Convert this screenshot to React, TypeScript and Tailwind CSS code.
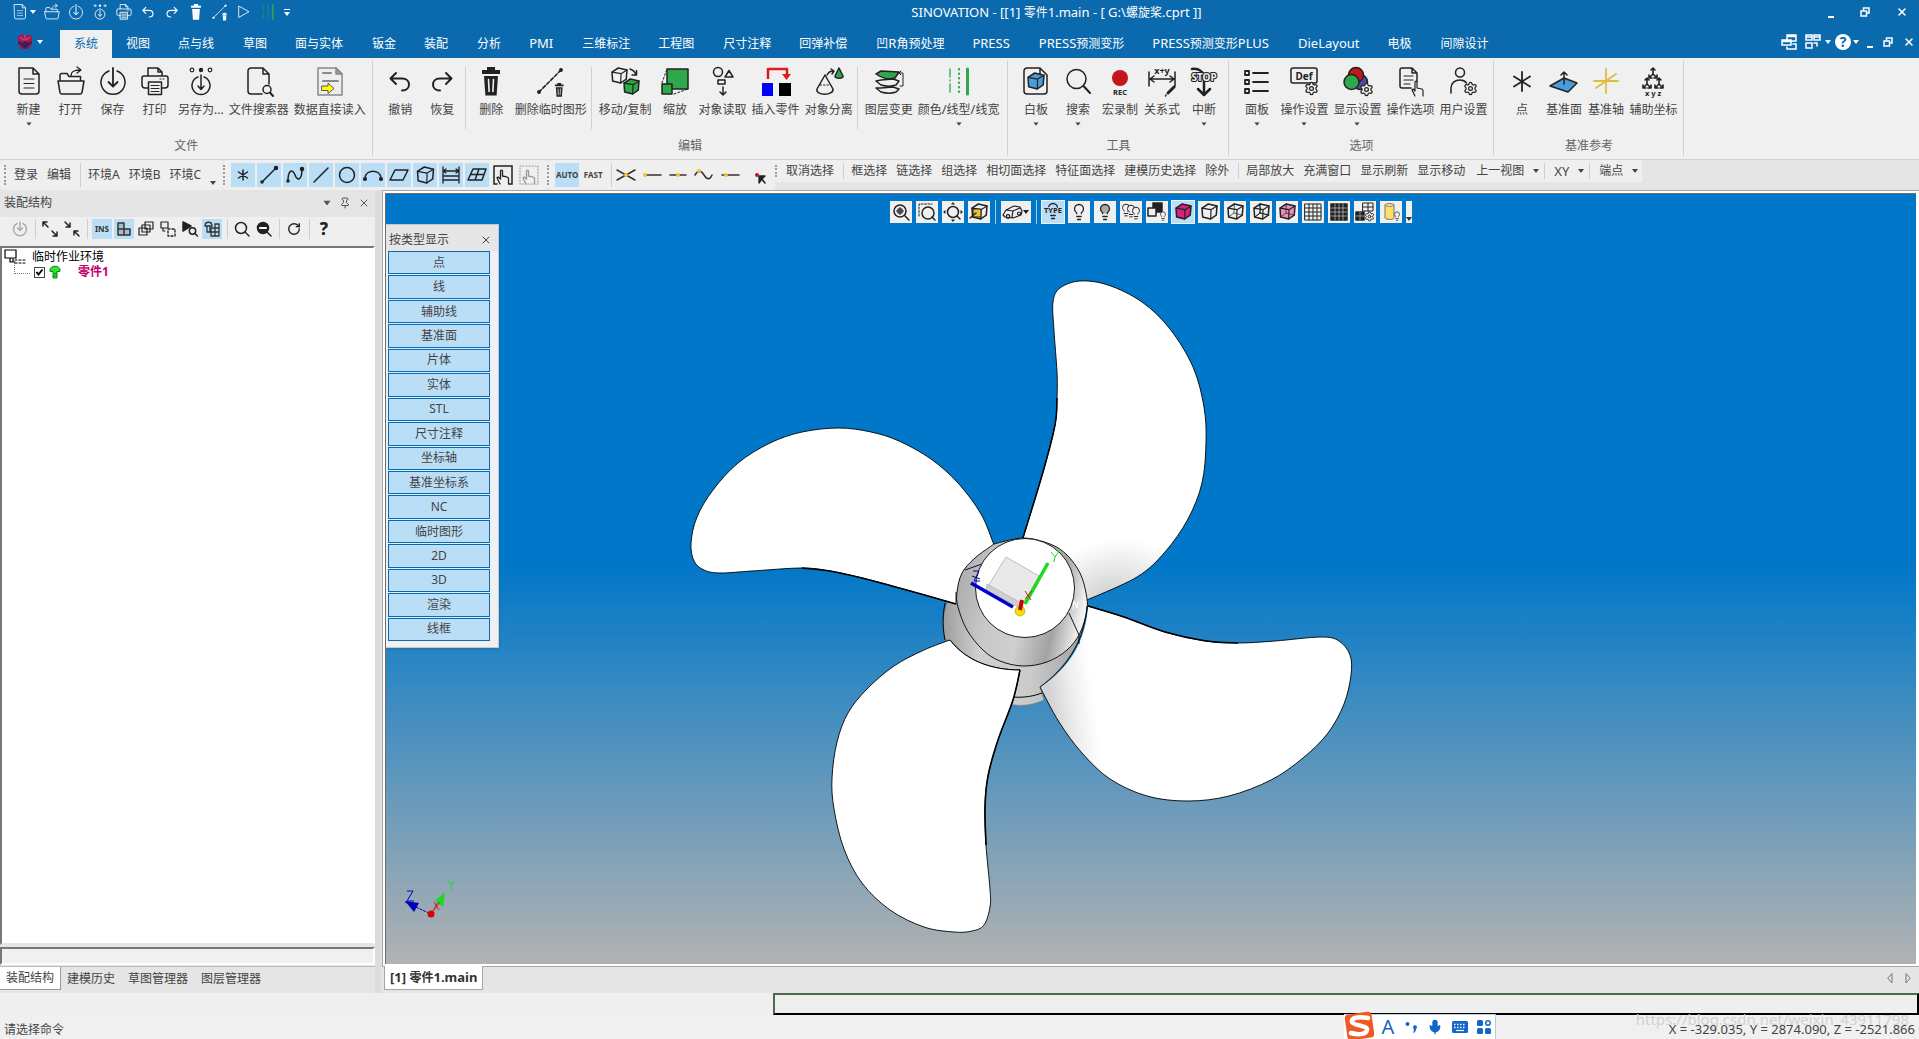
import React, { ReactNode } from "react";
import { Settings, Lightbulb, Pin, X, RotateCw, Mic } from "lucide-react";

type Pt = [number, number];

/** Catmull-Rom spline through the points, as an SVG path. */
function smooth(pts: Pt[], tail = ""): string {
  let d = `M${pts[0][0]} ${pts[0][1]}`;
  for (let i = 0; i < pts.length - 1; i++) {
    const p0 = pts[Math.max(i - 1, 0)];
    const p1 = pts[i];
    const p2 = pts[i + 1];
    const p3 = pts[Math.min(i + 2, pts.length - 1)];
    d += `C${p1[0] + (p2[0] - p0[0]) / 6} ${p1[1] + (p2[1] - p0[1]) / 6} ${p2[0] - (p3[0] - p1[0]) / 6} ${p2[1] - (p3[1] - p1[1]) / 6} ${p2[0]} ${p2[1]}`;
  }
  return d + tail;
}

/* ---------- shared bits ---------- */

/** Text whose Latin runs are set one pixel larger than the Chinese around them. */
function Mixed({ children }: { children: string }) {
  const runs = children.match(/[\x20-\x7e]+|[^\x20-\x7e]+/g) ?? [];
  return (
    <>
      {runs.map((r, i) => (/[A-Za-z0-9/\[\]]/.test(r) ? <span key={i} className="text-[13px] leading-none">{r}</span> : r))}
    </>
  );
}

function Caret({ className = "" }: { className?: string }) {
  return (
    <svg viewBox="0 0 6 4" className={`h-1 w-1.5 shrink-0 ${className}`} fill="currentColor" aria-hidden>
      <path d="M0 0h6L3 4z" />
    </svg>
  );
}

function Svg({ box, className, children }: { box: string; className: string; children: ReactNode }) {
  return (
    <svg
      viewBox={box}
      className={`shrink-0 overflow-visible ${className}`}
      fill="none"
      stroke="currentColor"
      strokeWidth="1.5"
      strokeLinecap="round"
      strokeLinejoin="round"
      aria-hidden
    >
      {children}
    </svg>
  );
}

function Cube({ x, y, s, fill = "none", hidden = false }: { x: number; y: number; s: number; fill?: string; hidden?: boolean }) {
  const p = (a: number, b: number) => `${x + a * s} ${y + b * s}`;
  return (
    <g>
      <path fill={fill} d={`M${p(0, 0.27)}L${p(0.42, 0)}L${p(1, 0.14)}L${p(0.95, 0.74)}L${p(0.58, 1)}L${p(0.04, 0.86)}Z`} />
      <path strokeWidth="1.2" d={`M${p(0, 0.27)}L${p(0.6, 0.38)}L${p(1, 0.14)}M${p(0.6, 0.38)}L${p(0.58, 1)}`} />
      {hidden && <path strokeWidth="0.7" d={`M${p(0.42, 0)}L${p(0.4, 0.6)}L${p(0.04, 0.86)}M${p(0.4, 0.6)}L${p(0.95, 0.74)}`} />}
    </g>
  );
}

function Gear({ x, y, s }: { x: number; y: number; s: number }) {
  return <Settings x={x} y={y} width={s} height={s} strokeWidth={2} fill="#f0f0f0" />;
}

function Grip() {
  return <span className="h-5 w-0 shrink-0 border-l-2 border-dotted border-[#9a9a9a]" />;
}

/* ---------- ribbon drawings (28 x 30) ---------- */

const trash = (
  <>
    <path fill="currentColor" stroke="none" d="M5 3h5V0h8v3h5v4H5zM7 9h14l-1.4 19.500H8.400z" />
    <path stroke="#f0f0f0" strokeWidth="1.600" d="M11.500 12.500l.6 12M16.500 12.500l-.6 12" />
  </>
);

const art: Record<string, ReactNode> = {
  doc: (
    <>
      <path d="M4 1h14l6 6v17a3 3 0 0 1-3 3H7a3 3 0 0 1-3-3zM18 1v6h6" />
      <path strokeWidth="1.100" d="M9 12h10M9 16.500h10M9 21h10" />
    </>
  ),
  open: (
    <>
      <path d="M3 14V8a1.500 1.500 0 0 1 1.500-1.500H10l2 3h11.500V14M1 14h26l-2 11.500a2 2 0 0 1-2 1.500H5a2 2 0 0 1-2-1.500z" />
      <path d="M14 9c0-4 2-6 9-6M20 0l4 3-4 3" strokeWidth="1.300" />
    </>
  ),
  save: (
    <>
      <path d="M10 4a12 12 0 1 0 8 0" />
      <path strokeWidth="1.800" d="M14 1v18M9.500 15l4.500 4.500 4.500-4.500" />
    </>
  ),
  print: (
    <>
      <path d="M7 9V1h10l4 4v4M17 1v4h4M7 21H4a3 3 0 0 1-3-3v-7a2 2 0 0 1 2-2h22a2 2 0 0 1 2 2v7a3 3 0 0 1-3 3h-3" />
      <path fill="#f0f0f0" fillOpacity=".2" d="M7.500 15h13v12.500h-13z" />
      <path strokeWidth="1" d="M10 18.500h8M10 21.500h8M10 24.500h8M19 12h1M22 12h1" />
    </>
  ),
  saveAs: (
    <>
      <circle cx="5" cy="3" r="1.800" strokeWidth="1.200" />
      <circle cx="14" cy="3" r="2.200" fill="currentColor" stroke="none" />
      <circle cx="23" cy="3" r="1.800" strokeWidth="1.200" />
      <path d="M11 10a9 9 0 1 0 6 0M14 8v14M11 19l3 3.500 3-3.500" />
    </>
  ),
  find: (
    <>
      <path d="M17 27H6a3 3 0 0 1-3-3V4a3 3 0 0 1 3-3h12l6 6v10M18 1v6h6" />
      <circle cx="22" cy="22.500" r="4" />
      <path strokeWidth="2" d="M25 25.500l3 3.500" />
    </>
  ),
  importDoc: (
    <>
      <path stroke="#888" fill="#eee" d="M2 1h18l6 6v21H2z" />
      <path stroke="#888" fill="#999" d="M20 1v6h6z" />
      <path stroke="#888" strokeWidth="2" d="M7 6h8M7 14h15" />
      <path fill="#ff0" stroke="#555" strokeWidth="1" d="M6 19h6v-3l6 5.500-6 5v-3H6z" />
    </>
  ),
  undo: <path strokeWidth="2" d="M10 6L4.500 11.500 10 17M5 11.500h11c5 0 7 3 7 6s-2 6-7 6" />,
  redo: <path strokeWidth="2" d="M18 6l5.500 5.500L18 17M23 11.500H12c-5 0-7 3-7 6s2 6 7 6" />,
  trash,
  trashTemp: (
    <>
      <path strokeWidth="1.600" strokeDasharray="3.500 2" d="M2 25L24 3" />
      <circle cx="2" cy="25" r="1.200" fill="currentColor" />
      <circle cx="24" cy="3" r="1.200" fill="currentColor" />
      <g transform="translate(15.500 16) scale(.48)">{trash}</g>
    </>
  ),
  move: (
    <>
      <Cube x={1} y={1} s={15} />
      <Cube x={13} y={12} s={15} fill="#2fa84a" />
      <path d="M19 2c3 1 5 3 6 5.500M25.500 3.500v4.500h-4.500" />
    </>
  ),
  scale: (
    <>
      <path strokeDasharray="2 2" strokeWidth="1" d="M1 16L6 2M13 27l14-5" />
      <path fill="#2fa84a" d="M6 2h21v20H6z" />
      <path fill="#2fa84a" d="M1 17h10v10H1z" />
    </>
  ),
  pick: (
    <>
      <circle cx="9" cy="5" r="4.500" />
      <path d="M16 10l4-6.500 4 6.500zM9 13h7v4H9zM14 20v8M11 25l3 3 3-3" />
    </>
  ),
  insert: (
    <>
      <path stroke="none" fill="#00f" d="M0 16h11v13H0z" />
      <path stroke="none" fill="#000" d="M17 16h12v13H17z" />
      <path stroke="#e01b1b" strokeWidth="2.500" strokeLinecap="butt" d="M6 12V2h19v6" />
      <path stroke="none" fill="#e01b1b" d="M20 7h9l-4.500 6z" />
    </>
  ),
  split: (
    <>
      <path d="M10 8L2 22c-2 7 17 7 16 0z" />
      <path strokeWidth="1" strokeDasharray="1.500 2" d="M5 18h9" />
      <path fill="#2fa84a" d="M24 1l-4 8c0 3 9 3 8 0z" />
      <path d="M12 8c1-2 3-4 6-4M16 2l3 2-2 3" />
    </>
  ),
  layers: (
    <>
      <path fill="#f0f0f0" d="M1 21l5 4c7 2 12 1 15 0l3-3-6-2-12 1z" />
      <path fill="#f0f0f0" d="M1 14l5 4c7 2 12 1 15 0l3-4-6-2-12 1z" />
      <path fill="#2fa84a" d="M1 7l5-3 18 1-4 6c-6 2-13 0-19-4z" />
      <path strokeWidth="1" d="M25 6h3v13h-3M26 4l-2 2 2 2" />
    </>
  ),
  lines: (
    <g stroke="#2fa84a">
      <path strokeWidth="1.300" strokeDasharray="8 3 1 3" d="M5 2v25" />
      <path strokeWidth="2.200" strokeDasharray="0.500 4" d="M14 2v25" />
      <path strokeWidth="3" d="M22.500 2v25" />
    </g>
  ),
  board: (
    <>
      <path d="M5 1h13l7 7v16a3 3 0 0 1-3 3H5a3 3 0 0 1-3-3V4a3 3 0 0 1 3-3zM18 1v7" />
      <Cube x={6} y={6} s={16} fill="#4a9bd8" />
    </>
  ),
  search: (
    <>
      <circle cx="12.500" cy="12" r="9.500" />
      <path strokeWidth="2" d="M19.500 19L26 26" />
    </>
  ),
  rec: (
    <>
      <circle cx="14" cy="11" r="8" fill="#c4161c" stroke="none" />
      <text x="14" y="28" textAnchor="middle" fontSize="7.500" fontWeight="700" fill="currentColor" stroke="none">REC</text>
    </>
  ),
  relation: (
    <>
      <text x="14" y="7" textAnchor="middle" fontSize="9" fontWeight="700" fill="currentColor" stroke="none">x+y</text>
      <path d="M1 5v14M27 5v14M2 12h24M6 9l-4 3 4 3M22 9l4 3-4 3" />
      <path strokeWidth="3" d="M26 20l-6 6" />
      <path d="M18 28l-.5 1" />
    </>
  ),
  stop: (
    <>
      <path strokeWidth="2.500" d="M2 2c7-1 12 3 12 9v16M8 22l6 6 6-6" />
      <text x="14" y="14" textAnchor="middle" fontSize="10" fontWeight="700" fill="#f0f0f0" stroke="currentColor" strokeWidth="2.2" paintOrder="stroke">STOP</text>
    </>
  ),
  panel: <path strokeWidth="1.800" d="M2 4h4v4H2zM2 13h4v4H2zM2 22h4v4H2zM10 6h15M10 15h15M10 24h15" />,
  opSet: (
    <>
      <rect x="1" y="1" width="26" height="15" rx="2" />
      <text x="14" y="12.500" textAnchor="middle" fontSize="10" fontWeight="700" fill="currentColor" stroke="none">Def</text>
      <Gear x={14} y={14} s={15} />
    </>
  ),
  dispSet: (
    <>
      <circle cx="17" cy="15" r="7.500" fill="#4c4aa0" />
      <circle cx="13" cy="8" r="7.500" fill="#c4161c" />
      <circle cx="8.500" cy="15" r="7.500" fill="#2fa84a" />
      <Gear x={16} y={15} s={15} />
    </>
  ),
  opOpt: (
    <>
      <path d="M15 21H6a2 2 0 0 1-2-2V3a2 2 0 0 1 2-2h10l5 5v9M16 1v5h5" />
      <path strokeWidth="1.200" d="M8 9h9M8 13h9M8 17h6" />
      <path fill="#f0f0f0" strokeWidth="1.200" d="M19 29l-3-6 1-1 2 2v-9c0-1.300 2-1.300 2 0v6l5 1 1 1.500v5.500" />
    </>
  ),
  user: (
    <>
      <circle cx="11" cy="5.500" r="4.500" />
      <path d="M2 26V21c0-5 4-8 9-8 3 0 5 1 6.500 3" />
      <Gear x={14} y={14} s={15} />
    </>
  ),
  point: <path strokeWidth="1.800" d="M14 5v19M6 9.500l16 10M22 9.500l-16 10" />,
  plane: (
    <>
      <path fill="#4a9bd8" d="M0 19l14-8 13 5-9 9z" />
      <path d="M14 17V5M11 8l3-3 3 3" />
    </>
  ),
  axis: <path stroke="#e0bd3c" strokeWidth="1.800" d="M14 2v24M2 14h24M4 21L24 7" />,
  coord: (
    <>
      {[[14, 7], [8, 17], [20, 17]].map(([x, y]) => (
        <path key={`${x}${y}`} strokeWidth="1.600" d={`M${x} ${y}v-6m-2 2l2-2 2 2M${x} ${y}l-4 4m0-3v3h3M${x} ${y}l4 4m0-3v3h-3`} />
      ))}
      <text x="14" y="29" textAnchor="middle" fontSize="7.500" fontWeight="700" fill="currentColor" stroke="none">x y z</text>
    </>
  ),
  play: <path d="M5 4l18 10L5 24z" />,
};

type RibbonItem = { label: string; icon: string; caret?: boolean } | "sep";
const ribbon: { name: string; items: RibbonItem[] }[] = [
  {
    name: "文件",
    items: [
      { label: "新建", icon: "doc", caret: true },
      { label: "打开", icon: "open" },
      { label: "保存", icon: "save" },
      { label: "打印", icon: "print" },
      { label: "另存为...", icon: "saveAs" },
      { label: "文件搜索器", icon: "find" },
      { label: "数据直接读入", icon: "importDoc" },
    ],
  },
  {
    name: "编辑",
    items: [
      { label: "撤销", icon: "undo" },
      { label: "恢复", icon: "redo" },
      "sep",
      { label: "删除", icon: "trash" },
      { label: "删除临时图形", icon: "trashTemp" },
      "sep",
      { label: "移动/复制", icon: "move" },
      { label: "缩放", icon: "scale" },
      { label: "对象读取", icon: "pick" },
      { label: "插入零件", icon: "insert" },
      { label: "对象分离", icon: "split" },
      "sep",
      { label: "图层变更", icon: "layers" },
      { label: "颜色/线型/线宽", icon: "lines", caret: true },
    ],
  },
  {
    name: "工具",
    items: [
      { label: "白板", icon: "board", caret: true },
      { label: "搜索", icon: "search", caret: true },
      { label: "宏录制", icon: "rec" },
      { label: "关系式", icon: "relation" },
      { label: "中断", icon: "stop", caret: true },
    ],
  },
  {
    name: "选项",
    items: [
      { label: "面板", icon: "panel", caret: true },
      { label: "操作设置", icon: "opSet", caret: true },
      { label: "显示设置", icon: "dispSet", caret: true },
      { label: "操作选项", icon: "opOpt" },
      { label: "用户设置", icon: "user" },
    ],
  },
  {
    name: "基准参考",
    items: [
      { label: "点", icon: "point" },
      { label: "基准面", icon: "plane" },
      { label: "基准轴", icon: "axis" },
      { label: "辅助坐标", icon: "coord" },
    ],
  },
];

const tabs = ["系统", "视图", "点与线", "草图", "面与实体", "钣金", "装配", "分析", "PMI", "三维标注", "工程图", "尺寸注释", "回弹补偿", "凹R角预处理", "PRESS", "PRESS预测变形", "PRESS预测变形PLUS", "DieLayout", "电极", "间隙设计"];

/* ---------- header ---------- */

function RestoreIcon() {
  return (
    <Svg box="0 0 10 10" className="size-2.5">
      <path strokeLinejoin="miter" d="M3.500 3V1h5.500v5H7M1 4h5.500v5H1z" />
    </Svg>
  );
}

function WindowButtons({ className }: { className: string }) {
  return (
    <div className={`flex items-center ${className}`}>
      <button type="button" aria-label="最小化" className="flex h-3 items-end"><span className="h-0.5 w-1.5 bg-white" /></button>
      <button type="button" aria-label="还原"><RestoreIcon /></button>
      <button type="button" aria-label="关闭"><X className="size-3" strokeWidth={3} /></button>
    </div>
  );
}

function Header() {
  const quick = ["open", "save", "saveAs", "print", "undo", "redo", "trash", "trashTemp", "play", "lines"];
  return (
    <header className="bg-[#0b69ae] text-white">
      <div className="relative flex h-[30px] items-start justify-between pt-0.5 pr-[11px] pl-3">
        <div className="flex h-5 items-center gap-2">
          <button type="button" aria-label="新建" className="flex items-center gap-0.5">
            <Svg box="0 0 28 29" className="size-4">{art.doc}</Svg>
            <Caret />
          </button>
          {quick.map((q) => (
            <button key={q} type="button" aria-label={q}>
              <Svg box="0 0 28 29" className="size-4">{art[q]}</Svg>
            </button>
          ))}
          <button type="button" aria-label="自定义" className="flex flex-col items-center gap-0.5">
            <span className="h-px w-1.5 bg-white" />
            <Caret />
          </button>
        </div>
        <h1 className="absolute inset-x-0 top-[5px] mx-auto w-fit pl-[194px] text-xs leading-4 whitespace-pre">
          <Mixed>{"SINOVATION - [[1] 零件1.main - [ G:\\螺旋桨.cprt ]]"}</Mixed>
        </h1>
        <WindowButtons className="h-5 gap-[26px]" />
      </div>
      <div className="flex h-7 items-stretch justify-between pr-1">
        <nav className="flex items-stretch">
          <button type="button" aria-label="应用菜单" className="flex w-[60px] items-center gap-1 pb-1 pl-[17px]">
            <svg viewBox="0 0 16 16" className="size-4" aria-hidden>
              <path fill="#a8164a" d="M1 2l3-1h8l3 1v8l-3 5H4l-3-5z" />
              <path fill="#3b1e5c" d="M1 7l5 2 2-3 2 3 5-2v2l-4 3-3-1-3 1-4-3zM4 12l4-1 4 1-4 3z" />
              <path stroke="#e8688f" strokeWidth=".8" fill="none" d="M8 1v6M3 3l4 3M13 3L9 6" />
            </svg>
            <Caret />
          </button>
          {tabs.map((t, i) => (
            <button
              key={t}
              type="button"
              className={
                i === 0
                  ? "bg-[#f0f0f0] px-3.5 text-xs whitespace-nowrap text-[#0b69ae]"
                  : "px-3.5 text-xs whitespace-nowrap nth-[even]:pr-[15px]"
              }
            >
              <Mixed>{t}</Mixed>
            </button>
          ))}
        </nav>
        <div className="flex items-center gap-1 pb-1">
          <button type="button" aria-label="层叠窗口">
            <Svg box="0 0 16 16" className="size-4"><path strokeLinejoin="miter" d="M6 5V1h9v6h-4M6 2.500h9M1 6h9v5H1zM1 7.500h9M12 10h3v5H6v-2" /></Svg>
          </button>
          <button type="button" aria-label="排列窗口" className="flex items-center gap-1 pl-1">
            <Svg box="0 0 16 16" className="size-4"><path strokeLinejoin="miter" d="M1 1h6v5H1zM9 1h6v5H9zM1 9h6v5H1zM9 9h3v3M9 3h6M1 3h6" /></Svg>
            <Caret />
          </button>
          <button type="button" aria-label="帮助" className="flex items-center gap-0.5">
            <span className="flex size-4 items-center justify-center rounded-full bg-white text-sm leading-4 font-bold text-[#0b69ae]">?</span>
            <Caret />
          </button>
          <WindowButtons className="gap-2.5 pl-1" />
        </div>
      </div>
    </header>
  );
}

function Ribbon() {
  return (
    <div className="flex h-[102px] border-b border-[#d0d0d0] bg-[#f0f0f0] pt-[3px] pb-[3px] pl-px text-[#444]">
      {ribbon.map((g) => (
        <section key={g.name} className="relative flex flex-col border-r border-[#d0d0d0] pr-1 pl-1.5 pt-1.5 nth-2:pr-1.5">
          <div className="flex">
            {g.items.map((it, i) =>
              it === "sep" ? (
                <span key={i} className="mr-1 ml-0.5 h-[62px] w-px bg-[#d0d0d0]" />
              ) : (
                <button key={i} type="button" className="flex min-w-[42px] flex-col items-center pr-0.5 pl-[3px]">
                  <Svg box="0 0 28 30" className="h-[30px] w-7 text-[#222]">{art[it.icon]}</Svg>
                  <span className="mt-[5px] h-4 text-xs leading-4 whitespace-nowrap"><Mixed>{it.label}</Mixed></span>
                  {it.caret && <Caret className="mt-1 scale-90" />}
                </button>
              ),
            )}
          </div>
          <h2 className="absolute inset-x-0 bottom-0.5 text-center text-xs leading-4 text-[#666]">{g.name}</h2>
        </section>
      ))}
    </div>
  );
}

/* ---------- tool strip ---------- */

const toggles: { name: string; on: boolean; draw: ReactNode }[] = [
  { name: "点", on: true, draw: <path d="M12 7v10M7.500 9l9 6M16.500 9l-9 6" /> },
  { name: "直线", on: true, draw: <><path d="M5 19L19 5" /><circle cx="5" cy="19" r="1" fill="currentColor" /><circle cx="19" cy="5" r="1.500" fill="currentColor" /></> },
  { name: "曲线", on: true, draw: <><path d="M5 18C5 6 10 6 12 12s7 6 7-6" /><circle cx="5" cy="18" r="1" fill="currentColor" /><circle cx="19" cy="6" r="1.500" fill="currentColor" /></> },
  { name: "线", on: true, draw: <path d="M5 19L19 5" /> },
  { name: "圆", on: true, draw: <circle cx="12" cy="12" r="7.500" /> },
  { name: "圆弧", on: true, draw: <><path d="M4 15c1-9 15-9 16 0" /><circle cx="4" cy="16" r="1.300" fill="currentColor" /><circle cx="20" cy="16" r="1.300" fill="currentColor" /></> },
  { name: "面", on: true, draw: <path d="M8 7h13l-5 10H3z" /> },
  { name: "体", on: true, draw: <Cube x={4.500} y={4} s={16} /> },
  { name: "尺寸", on: true, draw: <path strokeWidth="1.300" d="M4 4v16M20 4v16M4 8h16M7 6L4 8l3 2M17 6l3 2-3 2M4 13h16v4H4" /> },
  { name: "网格", on: true, draw: <path d="M8 6h13l-4 11H3zM5.500 11.500h13.500M14 6l-4 11" /> },
  { name: "选取", on: false, draw: <><path strokeLinejoin="miter" d="M3 3h18v18h-3M6 21H3V3" /><path strokeWidth="1.300" d="M9 21l-3-6 1-1 2.500 2V8c0-1.300 2-1.300 2 0v5l4 .8 2 1.200v6" /></> },
  { name: "框取", on: false, draw: <g stroke="#999"><path strokeWidth="1.200" strokeDasharray="1 2" d="M3 3h18v18H3z" /><path strokeWidth="1.300" d="M9 21l-3-6 1-1 2.500 2V8c0-1.300 2-1.300 2 0v5l4 .8 2 1.200v6" /></g> },
];

const dot = (x: number, y: number) => <circle cx={x} cy={y} r="2" fill="#f0c22e" stroke="none" />;
const snaps: { name: string; draw: ReactNode }[] = [
  { name: "交点", draw: <><path d="M3 7l9 5-9 5M21 7l-9 5 9 5" />{dot(12, 12)}</> },
  { name: "端点", draw: <><path d="M6 12h15" />{dot(5, 12)}</> },
  { name: "中点", draw: <><path d="M4 12h16" />{dot(12, 12)}</> },
  { name: "曲线点", draw: <><path d="M3 12c3-5 6-5 9 0s6 5 8 0" />{dot(7, 8)}</> },
  { name: "最近点", draw: <><path d="M4 12h17" />{dot(8, 12)}</> },
];

const textTools: (string | null)[] = ["取消选择", null, "框选择", "链选择", "组选择", "相切面选择", "特征面选择", "建模历史选择", "除外", null, "局部放大", "充满窗口", "显示刷新", "显示移动"];

function Divider({ className }: { className: string }) {
  return <span className={`w-px shrink-0 bg-[#cfcfcf] ${className}`} />;
}

function ToolStrip() {
  return (
    <div className="flex h-[30px] items-start bg-[#e5e5e5] text-xs leading-4 whitespace-nowrap text-[#444]">
      <div className="flex h-[30px] items-center rounded bg-[#efefef] pr-[7px] pl-1">
        <Grip />
        <div className="flex items-center gap-[9px] pl-2">
          <button type="button">登录</button>
          <button type="button">编辑</button>
          <Divider className="h-6" />
          <button type="button" className="-ml-0.5">环境A</button>
          <button type="button">环境B</button>
          <button type="button">环境C</button>
          <Caret className="mt-4" />
        </div>
      </div>
      <div className="flex h-[30px] items-center gap-0.5 rounded bg-[#efefef] pr-1.5">
        <Grip />
        <span className="w-0.5" />
        {toggles.map((t) => (
          <button key={t.name} type="button" aria-label={t.name} className={t.on ? "size-6 bg-[#badef6] text-[#222]" : "size-6 text-[#222]"}>
            <Svg box="0 0 24 24" className="size-6">{t.draw}</Svg>
          </button>
        ))}
      </div>
      <div className="flex h-[30px] items-center gap-0.5 rounded bg-[#efefef] pr-[3px]">
        <Grip />
        <button type="button" className="ml-1 size-6 bg-[#badef6] text-[8px] font-bold">AUTO</button>
        <button type="button" className="size-6 text-[8px] font-bold">FAST</button>
        <Divider className="ml-1 h-6" />
        {snaps.map((s) => (
          <button key={s.name} type="button" aria-label={s.name} className="size-6 text-[#333]">
            <Svg box="0 0 24 24" className="size-6">{s.draw}</Svg>
          </button>
        ))}
        <button type="button" aria-label="拾取" className="ml-1 size-6 text-[#222]">
          <Svg box="0 0 24 24" className="size-6">
            <circle cx="9" cy="12" r="2" fill="#c4161c" stroke="none" />
            <path strokeWidth="1.300" fill="currentColor" d="M11 20v-7h6l-3 3z" />
            <path strokeWidth="1.600" d="M13 15l4 5" />
          </Svg>
        </button>
      </div>
      <div className="-ml-1 flex h-[22px] items-center gap-[9px] bg-[#efefef] pl-1">
        <span className="h-3 w-0 border-l-2 border-dotted border-[#9a9a9a]" />
        {textTools.map((t, i) => (t ? <button key={i} type="button">{t}</button> : <Divider key={i} className="-mr-0.5 h-4" />))}
        <button type="button" className="ml-0.5 flex items-center gap-[9px]">上一视图<Caret /></button>
        <Divider className="-ml-1 h-4" />
        <button type="button" className="flex items-center gap-[9px]"><Mixed>XY</Mixed><Caret /></button>
        <Divider className="-ml-1 h-4" />
        <button type="button" className="flex items-center gap-[9px] pr-1">端点<Caret /></button>
      </div>
    </div>
  );
}

/* ---------- left panel ---------- */

type PanelTool = { name: string; on?: boolean; draw: ReactNode } | null;
const panelTools: PanelTool[] = [
  { name: "电源", draw: <g stroke="#aaa"><path d="M7 4.500a6.500 6.500 0 1 0 6 0M10 3v8M7.500 9l2.500 2.500L12.500 9" /></g> },
  null,
  { name: "展开", draw: <path d="M3 7V3h4M3 3l5 5M17 13v4h-4M17 17l-5-5" /> },
  { name: "收起", draw: <path d="M3 3l5 5M8 4v4H4M17 17l-5-5M12 16v-4h4" /> },
  null,
  { name: "INS", on: true, draw: <text x="10" y="13" textAnchor="middle" fontSize="8" fontWeight="700" fill="currentColor" stroke="none">INS</text> },
  { name: "结构", on: true, draw: <path fill="#999" fillOpacity=".5" d="M4 4h6v6H4zM4 10h6v6H4zM10 10h6v6h-6z" /> },
  { name: "复制", draw: <path fill="#efefef" strokeWidth="1.200" d="M9 3h8v7H9zM6 6h8v7H6zM3 9h8v7H3z" /> },
  { name: "替换", draw: <><path strokeWidth="1.200" d="M3 3h7v6H3zM5 9v3h2" /><path strokeWidth="1.300" strokeDasharray="2 2" d="M10 10h7v7h-7z" /></> },
  { name: "查找", draw: <><path fill="currentColor" d="M3 3l8 4-8 5z" /><circle cx="12.500" cy="12" r="3.200" fill="#efefef" /><path d="M15 14.500l2.500 2.500" /></> },
  { name: "零件", on: true, draw: <path strokeWidth="1.300" d="M3 7c0-5 7-5 7 0zM5 7v6h3V7M9 9h8v8H9zM9 13h8M13 5v12M13 5h4v4" /> },
  null,
  { name: "搜索", draw: <><circle cx="9" cy="9" r="5.500" /><path d="M13 13l4 4" /></> },
  { name: "排除", draw: <><circle cx="9" cy="9" r="5.500" fill="currentColor" /><path d="M13 13l4 4" /><path stroke="#fff" strokeWidth="2" d="M6 9h6" /></> },
  null,
  { name: "刷新", draw: <RotateCw x={3} y={3} width={14} height={14} strokeWidth={2.400} /> },
  null,
  { name: "帮助", draw: <text x="10" y="16" textAnchor="middle" fontSize="17" fontWeight="800" fill="currentColor" stroke="none">?</text> },
];

function LeftPanel() {
  return (
    <aside className="flex w-[375px] shrink-0 flex-col">
      <div className="flex h-[27px] items-center justify-between bg-[#e5e5e5] pr-[5px] pb-0.5 pl-1 text-xs text-[#444]">
        <h2>装配结构</h2>
        <div className="flex items-center gap-[7px] text-[#555]">
          <button type="button" aria-label="菜单" className="px-0.5"><Caret className="scale-125" /></button>
          <button type="button" aria-label="固定"><Pin className="size-3" /></button>
          <button type="button" aria-label="关闭"><X className="size-3" /></button>
        </div>
      </div>
      <div className="flex h-[29px] items-start gap-0.5 bg-[#efefef] pt-0.5 pl-2.5">
        {panelTools.map((t, i) =>
          t ? (
            <button key={i} type="button" aria-label={t.name} className={t.on ? "size-5 bg-[#badef6] text-[#333]" : "size-5 text-[#222]"}>
              <Svg box="0 0 20 20" className="size-5">{t.draw}</Svg>
            </button>
          ) : (
            <Divider key={i} className="mr-0.5 ml-[3px] h-5" />
          ),
        )}
      </div>
      <div className="flex-1 border-2 border-t-[#777] border-r-white border-b-[#e5e5e5] border-l-[#777] bg-white text-xs text-black">
        <div className="flex h-[17px] items-center gap-1 pl-0.5">
          <Svg box="0 0 24 16" className="h-4 w-6">
            <path strokeWidth="1.200" strokeLinejoin="miter" d="M1 1h11v8H1zM6 9v4h5M9 10v3" />
            <path strokeWidth="1.200" strokeDasharray="2 2" d="M11 11h12M11 14h12" />
          </Svg>
          <span>临时作业环境</span>
        </div>
        <label className="flex h-3.5 items-center pl-3">
          <span className="-mt-2 h-3 w-4 border-b border-l border-dotted border-[#777]" />
          <span className="ml-1 grid size-[11px]">
            <input type="checkbox" defaultChecked className="peer col-start-1 row-start-1 size-[11px] appearance-none border border-[#444] bg-white" />
            <svg viewBox="0 0 11 11" className="pointer-events-none col-start-1 row-start-1 hidden size-[11px] peer-checked:block" fill="none" stroke="#000" strokeWidth="2" aria-hidden>
              <path d="M2.500 5l2 2.500 4-5" />
            </svg>
          </span>
          <svg viewBox="0 0 12 14" className="ml-1 h-3.5 w-3" aria-hidden>
            <path fill="#3ddc3d" stroke="#0a8a0a" d="M1 5c0-5 10-5 10 0v1.500H8V13H4V6.500H1z" />
            <path stroke="#0a8a0a" d="M4 9l4-1M4 11.500l4-1" />
          </svg>
          <span className="ml-[17px] font-bold text-[#c7006e]">零件1</span>
        </label>
      </div>
      <input aria-label="筛选" className="mt-0.5 h-[18px] w-full border-2 border-t-[#777] border-r-white border-b-white border-l-[#777] bg-[#f0f0f0]" />
      <nav className="mt-px flex h-[27px] items-start border-t border-[#bbb] bg-[#e5e5e5] text-xs text-[#444]">
        <button type="button" className="h-[23px] border-r border-b border-[#999] bg-white px-1.5">装配结构</button>
        <button type="button" className="h-[23px] pr-[7px] pl-1.5">建模历史</button>
        <button type="button" className="h-[23px] pr-[7px] pl-1.5">草图管理器</button>
        <button type="button" className="h-[23px] px-1.5">图层管理器</button>
      </nav>
    </aside>
  );
}

/* ---------- 3D view ---------- */

const bladeTop: Pt[] = [[1022, 541], [1043, 472], [1055, 425], [1057, 398], [1057, 372], [1054, 331], [1053, 302], [1060, 288], [1080, 281], [1108, 285], [1142, 302], [1170, 329], [1193, 367], [1204, 407], [1206, 443], [1202, 483], [1188, 519], [1165, 552], [1137, 577], [1087, 600]];
const bladeLeft: Pt[] = [[994, 545], [981, 514], [958, 483], [931, 459], [899, 441], [871, 432], [839, 428], [802, 432], [770, 443], [738, 463], [713, 490], [697, 517], [691, 543], [694, 561], [704, 570], [720, 573], [752, 571], [802, 568], [830, 571], [862, 578], [903, 589], [956, 604]];
const bladeBottom: Pt[] = [[1020, 670], [1013, 700], [998, 740], [988, 776], [985, 807], [986, 845], [990, 889], [990, 907], [984, 925], [972, 931], [954, 932], [924, 927], [890, 910], [862, 883], [844, 849], [834, 809], [832, 778], [837, 742], [848, 713], [867, 689], [894, 666], [924, 650], [950, 640]];
const bladeRight: Pt[] = [[1088, 606], [1124, 617], [1165, 632], [1206, 641], [1238, 643], [1275, 641], [1321, 637], [1339, 641], [1350, 655], [1351, 675], [1344, 704], [1328, 733], [1303, 758], [1271, 780], [1229, 796], [1188, 801], [1147, 796], [1110, 779], [1082, 753], [1059, 722], [1040, 687]];
const cone: Pt[] = [[994, 544], [975, 558], [962, 573], [957, 592], [958, 607], [967, 630], [983, 650], [1000, 661], [1023, 666], [1047, 662], [1067, 650], [1080, 633], [1087, 610], [1086, 593], [1080, 573], [1067, 555], [1050, 544], [1023, 538], [994, 544]];

function Model() {
  return (
    <svg viewBox="386 194 1530 770" className="absolute inset-0 size-full" fontFamily="Noto Sans, sans-serif" aria-label="螺旋桨" role="img">
      <defs>
        <linearGradient id="coneShade" x1="0" x2="1" y1="0.2" y2="0.4">
          <stop offset="0" stopColor="#a9a9a9" />
          <stop offset=".3" stopColor="#c8c8c8" />
          <stop offset=".55" stopColor="#cfcfcf" />
          <stop offset=".8" stopColor="#a2a2a2" />
          <stop offset="1" stopColor="#f2f2f2" />
        </linearGradient>
        <linearGradient id="baseShade" x1="0" x2="1">
          <stop offset="0" stopColor="#9c9c9c" />
          <stop offset=".25" stopColor="#cfcfcf" />
          <stop offset=".6" stopColor="#cbcbcb" />
          <stop offset="1" stopColor="#9f9f9f" />
        </linearGradient>
        <radialGradient id="topShade" gradientUnits="userSpaceOnUse" cx="1110" cy="597" r="80" gradientTransform="translate(1110 597) rotate(-15) scale(1 .7) translate(-1110 -597)">
          <stop offset="0" stopColor="#d0d0d0" />
          <stop offset="1" stopColor="#fff" />
        </radialGradient>
        <linearGradient id="rightShade" gradientUnits="userSpaceOnUse" x1="1048" y1="690" x2="1092" y2="684">
          <stop offset="0" stopColor="#d2d2d2" />
          <stop offset=".5" stopColor="#ededed" />
          <stop offset="1" stopColor="#fff" />
        </linearGradient>
      </defs>

      <path fill="url(#baseShade)" stroke="#777" strokeWidth=".6" d="M948 600C942 615 942 630 945 640L950 640C965 660 990 670 1020 670L1010 704C1020 707 1034 705 1044 700L1040 687C1065 668 1085 640 1087 606Z" />
      <path fill="none" stroke="#000" d="M945 603C942 618 943 630 945 640M950 640C966 661 992 670 1020 670M1013 697C1024 698 1034 696 1042 693" />

      <path fill="url(#topShade)" stroke="#000" strokeWidth=".9" d={smooth(bladeTop)} />
      <path fill="none" stroke="#000" strokeWidth="1.500" d={smooth(bladeTop.slice(0, 4))} />
      <path fill="#fff" d={smooth(bladeLeft, "L975 585Z")} />
      <path fill="none" stroke="#000" strokeWidth=".9" d={smooth(bladeLeft)} />
      <path fill="none" stroke="#000" strokeWidth="1.600" d={smooth(bladeLeft.slice(17))} />
      <path fill="#fff" d={smooth(bladeBottom, "C966 661 992 670 1020 670Z")} />
      <path fill="none" stroke="#000" strokeWidth=".9" d={smooth(bladeBottom)} />
      <path fill="none" stroke="#000" d="M950 640C966 661 992 670 1020 670" />
      <path fill="none" stroke="#000" strokeWidth="1.600" d={smooth(bladeBottom.slice(0, 6))} />
      <path fill="url(#rightShade)" d={smooth(bladeRight, "C1070 668 1086 640 1088 606Z")} />
      <path fill="none" stroke="#000" strokeWidth=".9" d={smooth(bladeRight)} />
      <path fill="none" stroke="#000" strokeWidth="1.600" d={smooth(bladeRight.slice(0, 5))} />

      <path fill="url(#coneShade)" stroke="#000" strokeWidth=".9" d={smooth(cone)} />
      <path fill="none" stroke="#000" strokeWidth=".9" d="M956 604v-12M965 570l17-6M1040 687C1064 670 1084 645 1087 606M1069 613l10 22v9" />
      <ellipse cx="1025" cy="588" rx="49.500" ry="49.500" fill="#fff" stroke="#000" strokeWidth=".9" />

      <path fill="#e9e9e9" stroke="#bbb" d="M1006 557L1039 576L1021 607L987 588Z" />
      <path fill="#cfcfcf" stroke="#bbb" d="M987 584L1021 603V608L986 591Z" />
      <g strokeWidth="3.500">
        <path stroke="#00c" d="M971 583L1013 607" />
        <path stroke="#1bdc1b" d="M1048 563L1025 604" />
      </g>
      <circle cx="1020" cy="611" r="5" fill="#f2e200" stroke="#a89c00" strokeWidth=".6" />
      <path stroke="#c00" strokeWidth="4" d="M1022 600L1020 610" />
      <path fill="none" stroke="#1bdc1b" d="M1051 552l4 5 4-6M1055 557l-1 5" />
      <path fill="none" stroke="#00a" d="M973 571h6l-5 10h6M972 576l8 3" />
      <path fill="none" stroke="#c22" d="M1025 591l6 9M1032 591l-7 8" />
      <path fill="none" stroke="#fff" d="M1073 609l1-8 3 7 1-7" />

      <path stroke="#00b" strokeDasharray="3 1" d="M405 902L431 914" />
      <path fill="#00b" d="M405 901l14 2-5 9z" />
      <path stroke="#c22" d="M431 914L440 899" />
      <path fill="#1bdc1b" d="M445 892l-10 9 8 6z" />
      <circle cx="431" cy="914" r="3.500" fill="#d00" />
      <path fill="none" stroke="#00b" d="M407 891h6l-6 10h7" />
      <path fill="none" stroke="#1bdc1b" d="M448 881l3 4 3-4M451 885v5" />
      <path fill="none" stroke="#c22" d="M434 902l5 8M440 902l-6 8" />
    </svg>
  );
}

const typeNames = ["点", "线", "辅助线", "基准面", "片体", "实体", "STL", "尺寸注释", "坐标轴", "基准坐标系", "NC", "临时图形", "2D", "3D", "渲染", "线框"];

function TypePanel() {
  return (
    <section className="absolute top-[30px] -left-px w-[114px] border border-[#c8c8c8] bg-[#f0f0f0] pb-1.5 text-xs text-[#444] shadow-sm">
      <div className="flex h-[26px] items-center justify-between bg-[#e6e6e6] pt-1 pr-1.5 pl-[3px]">
        <h2>按类型显示</h2>
        <button type="button" aria-label="关闭"><X className="size-3" /></button>
      </div>
      <div className="ml-0.5 grid h-[390px] w-[102px] auto-rows-fr gap-px bg-[#d8f2ff]">
        {typeNames.map((n) => (
          <button key={n} type="button" className="border border-[#0b69ae] bg-[#badef6] leading-4">{n}</button>
        ))}
      </div>
    </section>
  );
}

const mesh = <path strokeWidth="1" d="M3 3h16v16H3zM3 7h16M3 11h16M3 15h16M7 3v16M11 3v16M15 3v16" />;
const bulb = (x: number, y: number, s: number, fill = "#f0f0f0") => <Lightbulb x={x} y={y} width={s} height={s} strokeWidth={1.7} fill={fill} />;

type ViewTool = { name: string; on?: boolean; wide?: boolean; draw: ReactNode } | null;
const viewTools: ViewTool[] = [
  { name: "缩放", draw: <><circle cx="10" cy="10" r="6" /><path d="M14.500 14.500L19 19" /><path strokeWidth="1.200" d="M10 6.500v7M6.500 10h7M8 8h4v4H8z" /></> },
  { name: "框选缩放", draw: <><path strokeWidth="1" strokeDasharray="2 1.500" d="M3 15V3h13" /><circle cx="12" cy="12" r="6" /><path d="M16 16l3 3" /></> },
  { name: "全屏", draw: <><circle cx="11" cy="11" r="5.500" /><path d="M15 15l3 3" /><path fill="currentColor" stroke="none" d="M9 3.500h4L11 1zM9 18.500h4L11 21zM3.500 9v4L1 11zM18.500 9v4L21 11z" /></> },
  { name: "视角", draw: <><Cube x={4} y={3} s={15} /><path fill="#f0c22e" strokeWidth="1.100" d="M5 8h8v8H5z" /><path d="M2 17l6-5" /></> },
  null,
  { name: "视图方式", wide: true, draw: <g strokeWidth="1.200"><path d="M2 14l3-5 8-4 6 1 2 4-1 4-8 3-8-1zM5 9l7 1 7-3M12 10l-1 6" /><circle cx="7" cy="15.500" r="1.800" /><circle cx="18" cy="12.500" r="1.500" /></g> },
  null,
  { name: "TYPE", on: true, draw: <>{bulb(2, 1, 18, "none")}<text x="11" y="12" textAnchor="middle" fontSize="7.500" fontWeight="700" fill="currentColor" stroke="#badef6" strokeWidth="1.500" paintOrder="stroke">TYPE</text></> },
  { name: "显示", draw: bulb(2, 2, 18) },
  { name: "隐藏", draw: bulb(2, 2, 18, "#aaa") },
  { name: "多项显示", draw: <>{bulb(-1, 2, 14)}{bulb(4, 3, 14)}{bulb(9, 5, 14)}</> },
  { name: "切换显示", draw: <><path fill="currentColor" d="M7 2h9v9H7z" /><path fill="#f0f0f0" d="M2 7h8v8H2z" />{bulb(12, 10, 10)}</> },
  { name: "着色", on: true, draw: <Cube x={4} y={3} s={15} fill="#d6217f" /> },
  { name: "线框", draw: <Cube x={4} y={3} s={15} /> },
  { name: "隐线", draw: <Cube x={4} y={3} s={15} hidden /> },
  { name: "全线", draw: <><Cube x={4} y={3} s={15} hidden /><path strokeWidth="1" d="M10 3v9l-5 4M10 12l9 2" /></> },
  { name: "半透明", draw: <Cube x={4} y={3} s={15} fill="#f08cc0" hidden /> },
  { name: "细网格", draw: mesh },
  { name: "粗网格", draw: <><path fill="#222" d="M3 3h16v16H3z" /><path stroke="#ddd" strokeWidth="0.600" d="M3 7h16M3 11h16M3 15h16M7 3v16M11 3v16M15 3v16" /></> },
  { name: "网格设置", draw: <><path strokeWidth="1" d="M9 2h10v8H9zM9 6h10M14 2v8" /><path fill="#222" d="M2 11h8v8H2z" /><path stroke="#ddd" strokeWidth=".6" d="M2 15h8M6 11v8" /><Gear x={10} y={10} s={11} /></> },
  { name: "圆柱", draw: <><path fill="#ffe066" stroke="#777" strokeWidth="1" d="M5 4c0-2 9-2 9 0v13c0 2-9 2-9 0zM5 4c0 2 9 2 9 0" />{bulb(12, 10, 10)}</> },
];

function ViewToolbar() {
  return (
    <div className="absolute inset-x-0 top-1.5 mx-auto flex h-6 w-fit items-center gap-1">
      {viewTools.map((t, i) =>
        t ? (
          <button
            key={i}
            type="button"
            aria-label={t.name}
            className={
              t.on
                ? "-mx-px flex size-6 items-center justify-center border border-[#e4f4ff] bg-[#badef6] text-[#222]"
                : "flex h-[22px] items-center bg-[#f0f0f0] text-[#222]"
            }
          >
            <Svg box="0 0 22 22" className="size-[22px]">{t.draw}</Svg>
            {t.wide && <Caret className="mr-0.5" />}
          </button>
        ) : (
          <span key={i} className="mx-px h-6 w-px bg-[#9fd0ee]" />
        ),
      )}
      <button type="button" aria-label="更多" className="flex h-[22px] w-1.5 items-end bg-[#f0f0f0] pb-0.5 text-[#333]"><Caret /></button>
    </div>
  );
}

function MainView() {
  return (
    <main className="flex min-w-0 flex-1 flex-col">
      <div className="flex flex-1 flex-col border-y border-l border-[#a5a5a5] bg-white pt-0.5 pr-[3px] pb-0.5 pl-0.5">
        <div className="relative flex-1 overflow-hidden border-t border-l border-[#6d6d6d] bg-linear-to-b/srgb from-[#0077c8] from-48% to-[#b2b2b2]">
          <Model />
          <ViewToolbar />
          <TypePanel />
        </div>
      </div>
      <div className="flex h-[26px] items-start justify-between bg-[#e5e5e5] pr-2 pl-0.5">
        <button type="button" className="-mt-px h-6 border border-t-0 border-[#a5a5a5] bg-white px-[5px] text-xs font-bold text-[#333]"><Mixed>[1] 零件1.main</Mixed></button>
        <div className="flex gap-3 pt-1.5 text-[#777]">
          <button type="button" aria-label="向左"><Svg box="0 0 6 12" className="h-3 w-1.5"><path strokeWidth="1" d="M5 1v9L1 5.500z" /></Svg></button>
          <button type="button" aria-label="向右"><Svg box="0 0 6 12" className="h-3 w-1.5"><path strokeWidth="1" d="M1 1v9l4-4.500z" /></Svg></button>
        </div>
      </div>
    </main>
  );
}

/* ---------- footer ---------- */

function InputMethodBar() {
  return (
    <div className="absolute right-[423px] bottom-0 flex h-[25px] items-center gap-[9px] border-t border-r border-[#b9cfe0] bg-white pr-1 text-[#1167c8]">
      <svg viewBox="0 0 32 30" className="-mt-1 h-[30px] w-8 shrink-0" aria-hidden>
        <rect x="2" y="3" width="27" height="26" rx="4" fill="#ee5a24" transform="rotate(-8 16 16)" />
        <path fill="none" stroke="#fff" strokeWidth="4.500" strokeLinecap="round" d="M24 8C14 6 7 8 8 12s16 3 15 8-10 5-16 3" />
      </svg>
      <button type="button" aria-label="英文" className="-ml-1 w-3.5 text-xl leading-5">A</button>
      <svg viewBox="0 0 14 14" className="size-3.5" fill="currentColor" aria-hidden>
        <circle cx="3.500" cy="4" r="2" />
        <path d="M9 7a2 2 0 1 1 3 2c0 2-1 3.500-3 4l1-3z" />
      </svg>
      <Mic className="size-4" fill="currentColor" />
      <svg viewBox="0 0 16 14" className="h-3.5 w-4" aria-hidden>
        <rect y="1" width="16" height="12" rx="1.500" fill="currentColor" />
        <path stroke="#fff" strokeWidth="1.500" strokeDasharray="1.500 1.500" d="M2 4.500h12M2 7.500h12" />
        <path stroke="#fff" strokeWidth="1.200" d="M4 10.500h8" />
      </svg>
      <svg viewBox="0 0 14 14" className="size-3.5" fill="currentColor" aria-hidden>
        <rect width="6" height="6" rx="1.500" />
        <rect y="8" width="6" height="6" rx="1.500" />
        <rect x="8" y="8" width="6" height="6" rx="1.500" />
        <circle cx="11" cy="3" r="2.200" fill="none" stroke="currentColor" strokeWidth="1.500" />
      </svg>
    </div>
  );
}

function Footer() {
  return (
    <footer className="relative bg-[#f0f0f0] text-xs text-[#444]">
      <div className="flex h-[22px] justify-end bg-[#efefef]">
        <input aria-label="命令" autoFocus className="h-[22px] w-[1146px] border-2 border-t-[#4d6b4d] border-r-black border-b-black border-l-[#4d6b4d] bg-[#efefef] px-px text-black outline-none" />
      </div>
      <p className="pointer-events-none absolute right-2.5 bottom-2.5 text-[15px] leading-5 text-[#d2d2d2]">https://blog.csdn.net/weixin_43911798</p>
      <div className="relative flex h-6 items-center justify-between pt-1.5 pr-1 pl-1">
        <span>请选择命令</span>
        <span className="pb-0.5 text-[13px] leading-4">X = -329.035, Y = 2874.090, Z = -2521.866</span>
      </div>
      <InputMethodBar />
    </footer>
  );
}

export default function App() {
  return (
    <div className="flex h-screen flex-col overflow-hidden bg-[#e5e5e5] font-['Noto_Sans','Noto_Sans_CJK_SC',sans-serif]">
      <Header />
      <Ribbon />
      <ToolStrip />
      <div className="flex min-h-0 flex-1">
        <LeftPanel />
        <div className="w-[7px] shrink-0 border-r border-[#e5e5e5] bg-[#dcdcdc]" />
        <MainView />
      </div>
      <Footer />
    </div>
  );
}
